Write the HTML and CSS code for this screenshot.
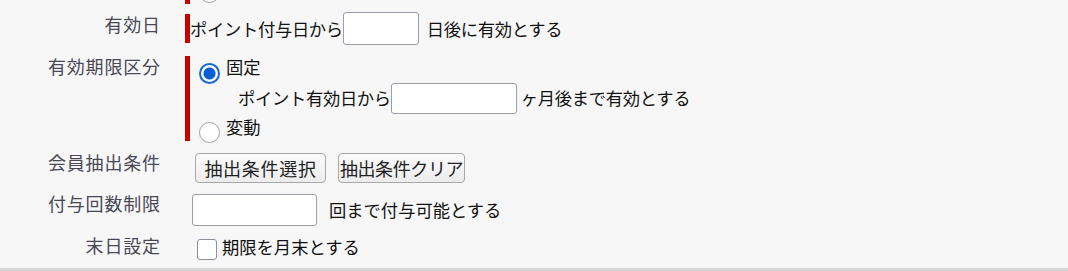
FILE: index.html
```html
<!DOCTYPE html>
<html lang="ja">
<head>
<meta charset="utf-8">
<link rel="stylesheet" href="styles.css">
</head>
<body>
<div class="form">
  <div class="row row0">
    <div class="label"></div>
    <div class="field req f0">
      <span class="radio r0"></span>
    </div>
  </div>

  <div class="row row1">
    <div class="label">有効日</div>
    <div class="field req f1">
      <span class="txt">ポイント付与日から</span>
      <input class="inp inp-s" type="text">
      <span class="txt after">日後に有効とする</span>
    </div>
  </div>

  <div class="row row2">
    <div class="label">有効期限区分</div>
    <div class="field req f2">
      <div class="line l1">
        <span class="radio checked"></span>
        <span class="txt">固定</span>
      </div>
      <div class="line l2">
        <span class="txt">ポイント有効日から</span>
        <input class="inp inp-m" type="text">
        <span class="txt after2">ヶ月後まで有効とする</span>
      </div>
      <div class="line l3">
        <span class="radio r2"></span>
        <span class="txt">変動</span>
      </div>
    </div>
  </div>

  <div class="row row3">
    <div class="label">会員抽出条件</div>
    <div class="field f3">
      <button class="btn btn1" type="button">抽出条件選択</button>
      <button class="btn btn2" type="button">抽出条件クリア</button>
    </div>
  </div>

  <div class="row row4">
    <div class="label">付与回数制限</div>
    <div class="field f4">
      <input class="inp inp-l" type="text">
      <span class="txt after3">回まで付与可能とする</span>
    </div>
  </div>

  <div class="row row5">
    <div class="label">末日設定</div>
    <div class="field f5">
      <span class="check"></span>
      <span class="txt">期限を月末とする</span>
    </div>
  </div>
</div>
</body>
</html>
```

FILE: styles.css
```css
html, body {
  margin: 0;
  padding: 0;
  background: #f7f7f7;
  overflow: hidden;
}

body {
  font-family: "Noto Sans CJK JP", "Noto Sans", sans-serif;
  color: #111;
}

.form {
  display: flex;
  flex-direction: column;
  padding-bottom: 7px;
  border-bottom: 4px solid #d4d4d4;
}

.row {
  display: grid;
  grid-template-columns: 160px 1fr;
  column-gap: 25px;
  align-items: start;
}

.label {
  text-align: right;
  font-size: 18px;
  line-height: 20px;
  letter-spacing: 0.8px;
  margin-right: -0.8px;
  color: #484856;
}

.field {
  display: flex;
  align-items: center;
  font-size: 17.3px;
  line-height: 22px;
}

.req {
  border-left: 5px solid #c80000;
}

.txt {
  white-space: nowrap;
}

/* row 0: tail of previous item, cut off at the top */
.row0 {
  margin-top: -26px;
  height: 30px;
}
.f0 {
  height: 30px;
  align-items: flex-end;
}
.r0 {
  margin-left: 9px;
  margin-bottom: 1px;
}

/* row 1 */
.row1 {
  margin-top: 10px;
}
.f1 {
  height: 29px;
}
.f1 > .txt:first-child {
  letter-spacing: -0.3px;
}
.inp {
  box-sizing: border-box;
  border: 1px solid #9c9caa;
  border-radius: 3px;
  background: #fff;
  padding: 0 4px;
  font: inherit;
  margin: 0;
}
.inp-s {
  width: 76px;
  height: 33px;
  flex: none;
}
.after {
  margin-left: 8px;
  letter-spacing: -0.3px;
}

/* row 2 */
.row2 {
  margin-top: 13px;
}
.f2 {
  flex-direction: column;
  align-items: stretch;
  height: 85px;
  box-sizing: border-box;
}
.line {
  display: flex;
  align-items: flex-start;
}
.l1 {
  height: 22px;
}
.l1 .radio {
  margin: 7px 6px 0 9px;
}
.l2 {
  margin-top: 5px;
  height: 30px;
  align-items: center;
  padding-left: 48px;
}
.l2 > .txt:first-child {
  letter-spacing: -0.3px;
}
.inp-m {
  width: 126px;
  height: 31px;
  flex: none;
}
.after2 {
  margin-left: 4px;
  letter-spacing: -0.3px;
}
.l3 {
  margin-top: 3px;
  height: 22px;
}
.l3 .radio {
  margin: 6px 6px 0 9px;
}

.radio {
  display: inline-block;
  flex: none;
  box-sizing: border-box;
  width: 21px;
  height: 21px;
  border-radius: 50%;
  border: 1px solid #9e9eae;
  background: #fff;
}
.radio.checked {
  border: 2px solid #1467db;
  background: radial-gradient(circle, #0b5fd6 0, #0b5fd6 5.5px, #fff 6.5px);
}

/* row 3 */
.row3 {
  margin-top: 11px;
}
.f3 {
  align-items: flex-start;
  padding-top: 1px;
  height: 31px;
}
.btn {
  box-sizing: border-box;
  height: 30px;
  margin: 0;
  padding: 0;
  border: 1px solid #a8a8a8;
  border-radius: 4px;
  background: linear-gradient(#fbfbfb, #ececec);
  font-family: inherit;
  font-size: 18px;
  line-height: 26px;
  color: #222;
  text-align: center;
}
.btn1 {
  width: 131px;
  margin-left: 10px;
  letter-spacing: 0.7px;
}
.btn2 {
  width: 127px;
  margin-left: 12px;
  letter-spacing: -0.4px;
}

/* row 4 */
.row4 {
  margin-top: 9px;
}
.f4 {
  height: 33px;
}
.inp-l {
  width: 125px;
  height: 32px;
  margin-left: 7px;
  flex: none;
}
.after3 {
  margin-left: 12px;
}

/* row 5 */
.row5 {
  margin-top: 9px;
}
.f5 {
  height: 26px;
  align-items: flex-start;
}
.f5 .txt {
  margin-top: 1px;
}
.check {
  display: inline-block;
  flex: none;
  box-sizing: border-box;
  width: 20px;
  height: 21px;
  margin: 4px 5px 0 12px;
  border: 1px solid #8e8e9c;
  border-radius: 3px;
  background: #fff;
}
```
